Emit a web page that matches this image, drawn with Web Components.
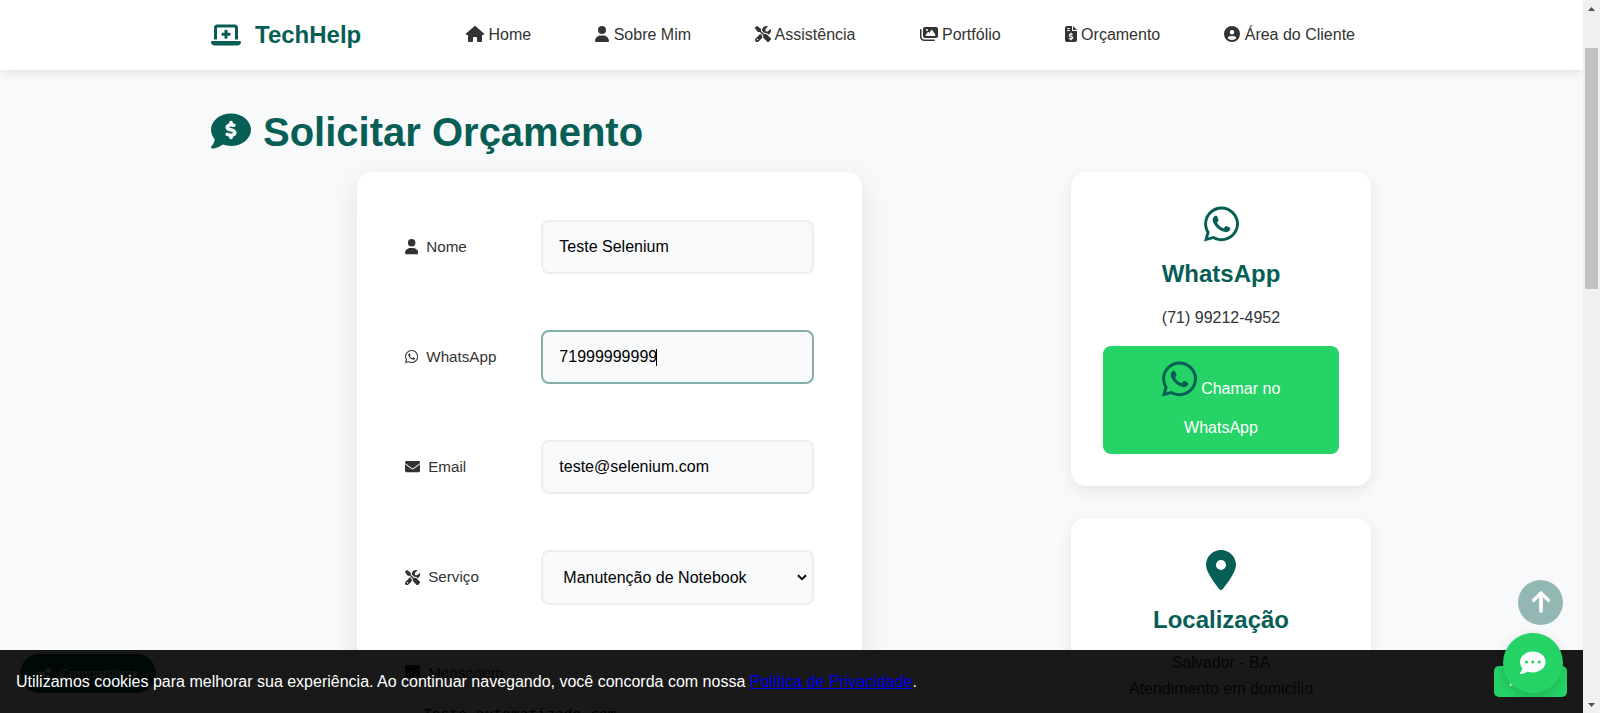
<!DOCTYPE html>
<html lang="pt-BR">
<head>
<meta charset="utf-8">
<title>TechHelp - Solicitar Orçamento</title>
<style>
html,body{margin:0;height:100%;overflow:hidden}
body{font:16px/1.6 "Liberation Sans",Arial,sans-serif;color:#333;background:#f8f9fb;--brand:#075e54;--wa:#25d366}
</style>
</head>
<body>
<tech-app></tech-app>
<script>
const BUBBLE='M256 448c141.4 0 256-93.1 256-208S397.4 32 256 32S0 125.1 0 240c0 45.1 17.7 86.8 47.7 120.9c-1.9 24.5-11.4 46.3-21.4 62.9c-5.5 9.2-11.1 16.6-15.2 21.6c-2.1 2.5-3.7 4.4-4.9 5.7c-.6 .6-1 1.1-1.3 1.4l-.3 .3c-4.6 4.6-5.9 11.4-3.4 17.4c2.5 6 8.3 9.9 14.8 9.9c28.7 0 57.6-8.9 81.6-19.3c22.9-10 42.4-21.9 54.3-30.6c31.8 11.5 67 17.9 104.1 17.9z';
const DOLLAR='c8.8 0 16 7.2 16 16l0 17.3c8.5 1.2 16.7 3.1 24.1 5.1c8.5 2.3 13.6 11 11.3 19.6s-11 13.6-19.6 11.3c-11.1-3-22-5.2-32.1-5.3c-8.4-.1-17.4 1.8-23.6 5.5c-5.7 3.4-8.1 7.3-8.1 12.8c0 3.7 1.3 6.5 7.3 10.1c6.9 4.1 16.6 7.1 29.2 10.9l.5 .1c11.3 3.4 25.3 7.6 36.3 14.6c12.1 7.6 22.4 19.7 22.7 38.2c.3 19.3-9.6 33.3-22.9 41.6c-7.7 4.8-16.4 7.6-25.1 9.1l0 17.1c0 8.8-7.2 16-16 16s-16-7.2-16-16l0-17.8c-11.2-2.1-21.7-5.7-30.9-8.9c-2.1-.7-4.2-1.4-6.2-2.1c-8.4-2.8-12.9-11.9-10.1-20.2s11.9-12.9 20.2-10.1c2.5 .8 4.8 1.6 7.1 2.4c13.6 4.6 24.6 8.4 36.3 8.7c9.1 .3 17.9-1.7 23.7-5.3c5.1-3.2 7.9-7.3 7.8-14c-.1-4.6-1.8-7.8-7.7-11.6c-6.8-4.3-16.5-7.4-29-11.2l-1.6-.5c-11-3.3-24.3-7.3-34.8-13.7c-12-7.2-22.6-18.9-22.7-37.3c-.1-19.4 10.8-32.8 23.8-40.5c7.5-4.4 15.8-7.2 24.1-8.7l0-17.3c0-8.8 7.2-16 16-16z';
// Each entry: viewBox width, path, optional extra markup drawn on top.
const ICONS={
laptop:[640,'M64 96c0-35.3 28.7-64 64-64l384 0c35.3 0 64 28.7 64 64l0 256-64 0 0-256L128 96l0 256-64 0L64 96zM0 403.2C0 392.6 8.6 384 19.2 384l601.6 0c10.6 0 19.2 8.6 19.2 19.2c0 42.4-34.4 76.8-76.8 76.8L76.8 480C34.4 480 0 445.6 0 403.2zM288 160c0-8.8 7.2-16 16-16l32 0c8.8 0 16 7.2 16 16l0 48 48 0c8.8 0 16 7.2 16 16l0 32c0 8.8-7.2 16-16 16l-48 0 0 48c0 8.8-7.2 16-16 16l-32 0c-8.8 0-16-7.2-16-16l0-48-48 0c-8.8 0-16-7.2-16-16l0-32c0-8.8 7.2-16 16-16l48 0 0-48z'],
house:[576,'M575.8 255.5c0 18-15 32.1-32 32.1l-32 0 .7 160.2c0 2.7-.2 5.4-.5 8.1l0 16.2c0 22.1-17.9 40-40 40l-16 0c-1.1 0-2.2 0-3.3-.1c-1.4 .1-2.8 .1-4.2 .1L416 512l-24 0c-22.1 0-40-17.9-40-40l0-24 0-64c0-17.7-14.3-32-32-32l-64 0c-17.7 0-32 14.3-32 32l0 64 0 24c0 22.1-17.9 40-40 40l-24 0-31.9 0c-1.5 0-3-.1-4.5-.2c-1.2 .1-2.4 .2-3.6 .2l-16 0c-22.1 0-40-17.9-40-40l0-112c0-.9 0-1.9 .1-2.8l0-69.7-32 0c-18 0-32-14-32-32.1c0-9 3-17 10-24L266.4 8c7-7 15-8 22-8s15 2 21 7L564.8 231.5c8 7 12 15 11 24z'],
user:[448,'M224 256A128 128 0 1 0 224 0a128 128 0 1 0 0 256zm-45.7 48C79.8 304 0 383.8 0 482.3C0 498.7 13.3 512 29.7 512l388.6 0c16.4 0 29.7-13.3 29.7-29.7C448 383.8 368.2 304 269.7 304l-91.4 0z'],
tools:[512,'M78.6 5C69.1-2.4 55.6-1.5 47 7L7 47c-8.5 8.5-9.4 22-2.1 31.6l80 104c4.5 5.9 11.6 9.4 19 9.4l54.1 0 109 109c-14.7 29-10 65.4 14.3 89.6l112 112c12.5 12.5 32.8 12.5 45.3 0l64-64c12.5-12.5 12.5-32.8 0-45.3l-112-112c-24.2-24.2-60.6-29-89.6-14.3l-109-109 0-54.1c0-7.5-3.5-14.5-9.4-19L78.6 5zM19.9 396.1C7.2 408.8 0 426.1 0 444.1C0 481.6 30.4 512 67.9 512c18 0 35.3-7.2 48-19.9L233.7 374.3c-7.8-20.9-9-43.6-3.6-65.1l-61.7-61.7L19.9 396.1zM512 144c0-10.5-1.1-20.7-3.2-30.5c-2.4-11.2-16.1-14.1-24.2-6l-63.9 63.9c-3 3-7.1 4.7-11.3 4.7L352 176c-8.8 0-16-7.2-16-16l0-57.4c0-4.2 1.7-8.3 4.7-11.3l63.9-63.9c8.1-8.1 5.2-21.8-6-24.2C388.7 1.1 378.5 0 368 0C288.5 0 224 64.5 224 144l0 .8 85.3 85.3c36-9.1 75.8 .5 104 28.7L429 274.5c49-23 83-72.8 83-130.5zM56 432a24 24 0 1 1 48 0 24 24 0 1 1 -48 0z'],
images:[576,'M160 32c-35.3 0-64 28.7-64 64l0 224c0 35.3 28.7 64 64 64l352 0c35.3 0 64-28.7 64-64l0-224c0-35.3-28.7-64-64-64L160 32zM396 138.7l96 144c4.9 7.4 5.4 16.8 1.2 24.6S480.9 320 472 320l-144 0-48 0-80 0c-9.2 0-17.6-5.3-21.6-13.6s-2.9-18.2 2.9-25.4l64-80c4.6-5.7 11.4-9 18.7-9s14.2 3.3 18.7 9l17.3 21.6 56-84C360.5 132 368 128 376 128s15.5 4 20 10.7zM192 128a32 32 0 1 1 64 0 32 32 0 1 1 -64 0zM48 120c0-13.3-10.7-24-24-24S0 106.7 0 120L0 344c0 75.1 60.9 136 136 136l320 0c13.3 0 24-10.7 24-24s-10.7-24-24-24l-320 0c-48.6 0-88-39.4-88-88l0-224z'],
invoice:[384,'M64 0C28.7 0 0 28.7 0 64L0 448c0 35.3 28.7 64 64 64l256 0c35.3 0 64-28.7 64-64l0-288-128 0c-17.7 0-32-14.3-32-32L224 0 64 0zM256 0l0 128 128 0L256 0zM64 80c0-8.8 7.2-16 16-16l64 0c8.8 0 16 7.2 16 16s-7.2 16-16 16L80 96c-8.8 0-16-7.2-16-16zm0 64c0-8.8 7.2-16 16-16l64 0c8.8 0 16 7.2 16 16s-7.2 16-16 16l-64 0c-8.8 0-16-7.2-16-16z',`<path d="M192 216${DOLLAR}" fill="#fff" stroke="#fff" stroke-width="14"/>`],
account:[512,'M399 384.2C376.9 345.8 335.4 320 288 320l-64 0c-47.4 0-88.9 25.8-111 64.2c35.2 39.2 86.2 63.8 143 63.8s107.8-24.7 143-63.8zM0 256a256 256 0 1 1 512 0A256 256 0 1 1 0 256zm256 16a72 72 0 1 0 0-144 72 72 0 1 0 0 144z'],
quote:[512,BUBBLE,`<path transform="translate(0 19) scale(1 .92)" d="M256 124${DOLLAR}" fill="#f8f9fb" stroke="#f8f9fb" stroke-width="16"/>`],
chat:[512,BUBBLE+'M96 240a32 32 0 1 1 64 0 32 32 0 1 1 -64 0zM224 240a32 32 0 1 1 64 0 32 32 0 1 1 -64 0zM352 240a32 32 0 1 1 64 0 32 32 0 1 1 -64 0z'],
whatsapp:[448,'M380.9 97.1C339 55.1 283.2 32 223.9 32c-122.4 0-222 99.6-222 222 0 39.1 10.2 77.3 29.6 111L0 480l117.7-30.9c32.4 17.7 68.9 27 106.1 27h.1c122.3 0 224.1-99.6 224.1-222 0-59.3-25.2-115-67.1-157zm-157 341.6c-33.2 0-65.7-8.9-94-25.7l-6.7-4-69.8 18.3L72 359.2l-4.4-7c-18.5-29.4-28.2-63.3-28.2-98.2 0-101.7 82.8-184.5 184.6-184.5 49.3 0 95.6 19.2 130.4 54.1 34.8 34.9 56.2 81.2 56.1 130.5 0 101.8-84.9 184.6-186.6 184.6zm101.2-138.2c-5.5-2.8-32.8-16.2-37.9-18-5.1-1.9-8.8-2.8-12.5 2.8-3.7 5.6-14.3 18-17.6 21.8-3.2 3.7-6.5 4.2-12 1.4-32.6-16.3-54-29.1-75.5-66-5.7-9.8 5.7-9.1 16.3-30.3 1.8-3.7.9-6.9-.5-9.7-1.4-2.8-12.5-30.1-17.1-41.2-4.5-10.8-9.1-9.3-12.5-9.5-3.2-.2-6.9-.2-10.6-.2-3.7 0-9.7 1.4-14.8 6.9-5.1 5.6-19.4 19-19.4 46.3 0 27.3 19.9 53.7 22.6 57.4 2.8 3.7 39.1 59.7 94.8 83.8 35.2 15.2 49 16.5 66.6 13.9 10.7-1.6 32.8-13.4 37.4-26.4 4.6-13 4.6-24.1 3.2-26.4-1.3-2.5-5-3.9-10.5-6.6z'],
mail:[512,'M48 64C21.5 64 0 85.5 0 112c0 15.1 7.1 29.3 19.2 38.4L236.8 313.6c11.4 8.5 27 8.5 38.4 0L492.8 150.4c12.1-9.1 19.2-23.3 19.2-38.4c0-26.5-21.5-48-48-48L48 64zM0 176L0 384c0 35.3 28.7 64 64 64l384 0c35.3 0 64-28.7 64-64l0-208L294.4 339.2c-22.8 17.1-54 17.1-76.8 0L0 176z'],
message:[512,'M64 0C28.7 0 0 28.7 0 64L0 352c0 35.3 28.7 64 64 64l96 0 0 80c0 6.1 3.4 11.6 8.8 14.3s11.9 2.1 16.8-1.5L309.3 416 448 416c35.3 0 64-28.7 64-64l0-288c0-35.3-28.7-64-64-64L64 0z'],
pin:[384,'M215.7 499.2C267 435 384 279.4 384 192C384 86 298 0 192 0S0 86 0 192c0 87.4 117 243 168.3 307.2c12.3 15.3 35.1 15.3 47.4 0zM192 128a64 64 0 1 1 0 128 64 64 0 1 1 0-128z'],
up:[384,'M214.6 41.4c-12.5-12.5-32.8-12.5-45.3 0l-160 160c-12.5 12.5-12.5 32.8 0 45.3s32.8 12.5 45.3 0L160 141.2V448c0 17.7 14.3 32 32 32s32-14.3 32-32V141.2L329.4 246.6c12.5 12.5 32.8 12.5 45.3 0s12.5-32.8 0-45.3l-160-160z'],
share:[448,'M352 224c53 0 96-43 96-96s-43-96-96-96s-96 43-96 96c0 4 .2 8 .7 11.9l-94.1 47C145.4 170.2 121.9 160 96 160c-53 0-96 43-96 96s43 96 96 96c25.9 0 49.4-10.2 66.6-26.9l94.1 47c-.5 3.9-.7 7.8-.7 11.9c0 53 43 96 96 96s96-43 96-96s-43-96-96-96c-25.9 0-49.4 10.2-66.6 26.9l-94.1-47c.5-3.9 .7-7.8 .7-11.9s-.2-8-.7-11.9l94.1-47C302.6 213.8 326.1 224 352 224z']
};
function define(name,html){
  const t=document.createElement('template');
  customElements.define(name,class extends HTMLElement{
    connectedCallback(){
      if(this.shadowRoot)return;
      t.innerHTML=typeof html==='function'?html(this):html;
      this.attachShadow({mode:'open'}).append(t.content.cloneNode(true));
    }
  });
}
define('fa-icon',el=>{
  const [w,d,extra='']=ICONS[el.getAttribute('name')];
  return `<style>:host{display:inline-block;line-height:1;vertical-align:-.125em;height:1em;width:${w/512}em}svg{display:block;width:100%;height:100%;fill:currentColor}</style>
  <svg viewBox="0 0 ${w} 512" aria-hidden="true"><path fill-rule="evenodd" d="${d}"/>${extra}</svg>`;
});
define('nav-link',el=>`<style>:host{display:block;padding:0 16px;white-space:nowrap}</style><fa-icon name="${el.getAttribute('icon')}"></fa-icon> <slot></slot>`);
define('site-header',`<style>
:host{display:block;position:relative;z-index:1;height:70px;background:#fff;box-shadow:0 2px 10px rgba(0,0,0,.1)}
.in{box-sizing:border-box;width:1200px;height:70px;margin-left:191px;padding:0 20px;display:flex;justify-content:space-between;align-items:center}
.logo{display:flex;align-items:center;gap:14px;color:var(--brand);font-weight:700;font-size:24px;line-height:38px}
nav{display:flex;gap:32px}
</style><div class="in"><div class="logo"><fa-icon name="laptop"></fa-icon><span>TechHelp</span></div>
<nav><nav-link icon="house">Home</nav-link><nav-link icon="user">Sobre Mim</nav-link><nav-link icon="tools">Assistência</nav-link><nav-link icon="images">Portfólio</nav-link><nav-link icon="invoice">Orçamento</nav-link><nav-link icon="account">Área do Cliente</nav-link></nav></div>`);
define('form-field',el=>`<style>
:host{display:grid;grid-template-columns:1fr 2fr;align-items:center;height:54px}
:host([select]){height:55px}
label{font-size:15.2px;display:flex;align-items:center;gap:8px}
.box{box-sizing:border-box;height:54px;border:2px solid #eee;border-radius:8px;background:#f8f9fb;color:#000;padding:0 16px;display:flex;align-items:center;line-height:18px}
:host([focused]) .box{border-color:#83aea9}
i{width:1px;height:17px;margin-left:-1px;background:#000}
:host([select]) .box{height:55px;padding:0 5px 0 20px;justify-content:space-between}
svg{display:block;width:10px;height:7px}
</style><label><fa-icon name="${el.getAttribute('icon')}"></fa-icon><span>${el.getAttribute('label')}</span></label>
<div class="box"><slot></slot>${el.hasAttribute('focused')?'<i></i>':''}${el.hasAttribute('select')?'<svg viewBox="0 0 10 7"><path d="M1 1.2 5 5.2 9 1.2" fill="none" stroke="#000" stroke-width="2"/></svg>':''}</div>`);
define('quote-form',`<style>
:host{display:block;box-sizing:border-box;width:505px;height:760px;padding:48px;background:#fff;border-radius:15px;box-shadow:0 10px 30px rgba(0,0,0,.1)}
form{display:grid;gap:56px}
.msg{display:flex;gap:8px;align-items:center;font-size:15.2px;line-height:24px}
.area{box-sizing:border-box;width:232px;height:120px;margin-top:-54px;border:2px solid #eee;border-radius:8px;background:#f8f9fb;color:#000;padding:16px;font:14.6px/18px "DejaVu Sans Mono",monospace;white-space:nowrap}
</style><form><form-field icon="user" label="Nome">Teste Selenium</form-field>
<form-field icon="whatsapp" label="WhatsApp" focused>71999999999</form-field>
<form-field icon="mail" label="Email">teste@selenium.com</form-field>
<form-field icon="tools" label="Serviço" select>Manutenção de Notebook</form-field>
<div class="msg"><fa-icon name="message"></fa-icon><span>Mensagem</span></div>
<div class="area">Teste automatizado com</div></form>`);
define('info-card',el=>`<style>
:host{display:block;box-sizing:border-box;width:300px;padding:32px;background:#fff;border-radius:15px;box-shadow:0 5px 15px rgba(0,0,0,.08);text-align:center}
.ic{height:40px;font-size:40px;color:var(--brand)}
.ic fa-icon{display:block;margin:auto}
h3{margin:11px 0 0;font-size:24px;line-height:38px;color:var(--brand)}
.body{margin-top:12px}
:host([icon=pin]) .body{margin-top:11px}
</style><div class="ic"><fa-icon name="${el.getAttribute('icon')}"></fa-icon></div><h3>${el.getAttribute('heading')}</h3><div class="body"><slot></slot></div>`);
define('wa-button',`<style>
:host{display:block;box-sizing:border-box;height:108px;margin-top:15.4px;padding-top:13px;border-radius:8px;background:var(--wa);color:#fff}
.a{height:44px;line-height:44px}fa-icon{font-size:40px;color:var(--brand)}
.b{line-height:26px;margin-top:12px}
</style><div class="a"><fa-icon name="whatsapp"></fa-icon> <span>Chamar no</span></div><div class="b">WhatsApp</div>`);
define('share-pill',`<style>:host{position:absolute;left:20px;top:654px;width:136px;height:39px;border-radius:20px;background:var(--brand);color:#fff;display:flex;align-items:center;justify-content:center;gap:8px;font-size:13.6px}</style><fa-icon name="share"></fa-icon><span>Compartilhar</span>`);
define('cookie-bar',`<style>
:host{position:absolute;left:0;right:0;bottom:0;height:63px;box-sizing:border-box;padding:0 16px;background:rgba(0,0,0,.9);color:#fff;display:flex;align-items:center;justify-content:space-between}
a{color:#00e;text-decoration:underline}
button{font:13.333px "Liberation Sans",Arial,sans-serif;line-height:15px;border:0;border-radius:5px;background:var(--wa);color:#fff;padding:8px 16px}
</style><span>Utilizamos cookies para melhorar sua experiência. Ao continuar navegando, você concorda com nossa <a>Política de Privacidade</a>.</span><button>Aceitar</button>`);
define('round-button',el=>`<style>
:host{position:absolute;right:20px;border-radius:50%;display:flex;align-items:center;justify-content:center;color:#fff;font-size:25.6px}
:host([kind=top]){top:579.5px;width:45px;height:45px;background:#93b7b3;font-size:24px}
:host([kind=top]) fa-icon{stroke:#fff;stroke-width:14px}
:host([kind=chat]){top:633px;width:60px;height:60px;background:var(--wa);box-shadow:0 4px 12px rgba(0,0,0,.15)}
</style><fa-icon name="${el.getAttribute('icon')}"></fa-icon>`);
define('scroll-track',`<style>
:host{box-sizing:border-box;display:flex;flex-direction:column;align-items:center;width:17px;height:713px;background:#f0f0f0;padding:7px 0 6px}
svg{width:7px;height:4px;display:block;fill:#505050}
.t{width:13px;height:241px;background:#c1c1c1;margin:37px 0 auto}
</style><svg viewBox="0 0 7 4"><path d="M0 4 3.5 0 7 4z"/></svg><div class="t"></div><svg viewBox="0 0 7 4"><path d="M0 0 3.5 4 7 0z"/></svg>`);
define('tech-app',`<style>
:host{display:flex;height:713px;overflow:hidden}
.page{position:relative;flex:1;overflow:hidden}
main{box-sizing:border-box;width:1200px;margin-left:191px;padding:29px 20px 0}
h1{margin:0;display:flex;align-items:center;gap:12px;height:64px;font-size:40px;line-height:64px;color:var(--brand)}
h1 span{padding-top:2px}
.cols{display:flex;justify-content:space-between;padding:9px 0 0 146px}
aside{display:grid;gap:32px;align-content:start}
</style><div class="page"><site-header></site-header>
<main><h1><fa-icon name="quote"></fa-icon><span>Solicitar Orçamento</span></h1>
<div class="cols"><quote-form></quote-form><aside>
<info-card icon="whatsapp" heading="WhatsApp"><div>(71) 99212-4952</div><wa-button></wa-button></info-card>
<info-card icon="pin" heading="Localização"><div>Salvador - BA</div><div>Atendimento em domicílio</div></info-card></aside></div></main>
<share-pill></share-pill><cookie-bar></cookie-bar><round-button kind="top" icon="up"></round-button><round-button kind="chat" icon="chat"></round-button></div><scroll-track></scroll-track>`);
</script>
</body>
</html>
